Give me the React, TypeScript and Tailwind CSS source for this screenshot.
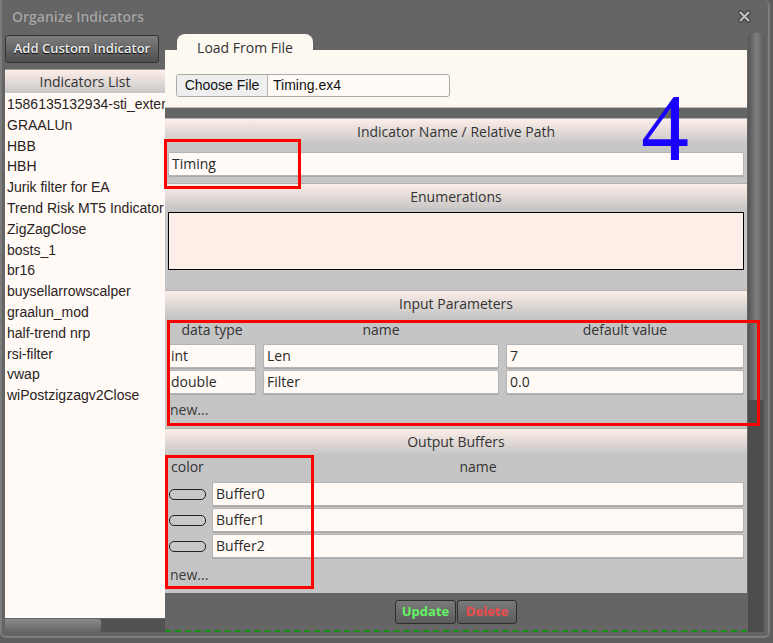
import type { ReactNode } from 'react'

const INDICATORS = [
  '1586135132934-sti_external',
  'GRAALUn',
  'HBB',
  'HBH',
  'Jurik filter for EA',
  'Trend Risk MT5 Indicator',
  'ZigZagClose',
  'bosts_1',
  'br16',
  'buysellarrowscalper',
  'graalun_mod',
  'half-trend nrp',
  'rsi-filter',
  'vwap',
  'wiPostzigzagv2Close',
]

const PARAMS = [
  { type: 'int', name: 'Len', value: '7' },
  { type: 'double', name: 'Filter', value: '0.0' },
]

const BUFFERS = ['Buffer0', 'Buffer1', 'Buffer2']

const sans = "font-['Open_Sans','Noto_Sans',sans-serif]"
const arial = "font-['Liberation_Sans',Arial,sans-serif]"

function Field({ value, className = '' }: { value: string; className?: string }) {
  return (
    <div
      className={`h-[24px] bg-[#fffaf6] border border-[#b4b4b4] rounded-[2px] shadow-[0_1px_0_#a8a8a8] pl-[3px] text-[14px] leading-[22px] text-[#2a2a2a] ${sans} ${className}`}
    >
      {value}
    </div>
  )
}

function SectionHeader({ children }: { children: ReactNode }) {
  return (
    <div
      className={`h-[27px] border-t border-[#b0b0b0] bg-gradient-to-b from-[#fdeee8] to-[#c5c5c5] text-center text-[14px] leading-[26px] text-[#333] ${sans}`}
    >
      {children}
    </div>
  )
}

function CloseIcon() {
  return (
    <svg width="15" height="15" viewBox="0 0 15 15">
      <path d="M3.5 3.5 L11.5 11.5 M11.5 3.5 L3.5 11.5" stroke="#3e3e3e" strokeWidth="4.6" strokeLinecap="round" />
      <path d="M3.5 3.5 L11.5 11.5 M11.5 3.5 L3.5 11.5" stroke="#bdbdbd" strokeWidth="2.4" strokeLinecap="round" />
    </svg>
  )
}

export default function App() {
  return (
    <div className="relative w-[773px] h-[643px] bg-[#5e5e5e] overflow-hidden">
      <div className="w-[770px] h-[638px] bg-[#656565] border-x-2 border-b-2 border-[#7c7c7c] rounded-b-[6px] rounded-tr-[6px] flex flex-col">
        {/* Title bar */}
        <div className="h-[33px] shrink-0 flex items-center justify-between pl-[10px] pr-[16px]">
          <span className={`text-[14px] font-semibold text-[#a6a6a6] [text-shadow:0_0_1px_#555] ${sans}`}>Organize Indicators</span>
          <CloseIcon />
        </div>

        <div className="flex flex-row flex-1 min-h-0">
          {/* Left column: indicator list */}
          <div className="w-[160px] ml-[3px] flex flex-col">
            <button
              className={`mt-[2px] h-[28px] w-[154px] rounded-[3px] border border-[#333] bg-gradient-to-b from-[#7e7e7e] to-[#4e4e4e] text-[13px] font-semibold text-[#ececec] [text-shadow:0_1px_1px_#000] ${sans}`}
            >
              Add Custom Indicator
            </button>

            <div className="mt-[6px] h-[549px] bg-[#fffaf5] border-t border-[#9a9a9a] overflow-hidden">
              <div className={`h-[23px] bg-gradient-to-b from-[#fdeee8] to-[#c8c8c8] text-center text-[14px] leading-[23px] text-[#333] ${sans}`}>
                Indicators List
              </div>
              <ul className={`pl-[2px] pt-[1px] text-[14px] leading-[20.8px] text-[#2b2222] ${arial}`}>
                {INDICATORS.map((name) => (
                  <li key={name} className="whitespace-nowrap overflow-hidden">
                    {name}
                  </li>
                ))}
              </ul>
            </div>

            {/* horizontal scrollbar */}
            <div className="mt-[1px] h-[13px] flex bg-[#525252]">
              <div className="w-[96px] h-full rounded-r-[3px] bg-gradient-to-b from-[#8a8a8a] to-[#666]" />
            </div>
          </div>

          {/* Right column: editor */}
          <div className="w-[582px] flex flex-col">
            <div className="mt-[1px] h-[16px] shrink-0">
              <div className={`relative z-10 ml-[12px] w-[136px] h-[24px] rounded-t-[8px] bg-[#fdf9f1] text-center text-[14px] leading-[18px] pt-[5px] text-[#333] ${sans}`}>
                Load From File
              </div>
            </div>
            <div className="h-[58px] shrink-0 bg-[#fdf9f1] border-b border-[#bbb] pt-[24px] pl-[11px]">
              <div className={`w-[274px] h-[23px] flex border border-[#a9a9a9] rounded-[3px] bg-[#fffaf5] ${arial}`}>
                <div className="w-[91px] bg-[#efefef] border-r border-[#b5b5b5] rounded-l-[2px] text-center text-[14px] leading-[21px] text-[#111]">
                  Choose File
                </div>
                <div className="pl-[5px] text-[14px] leading-[21px] text-[#111]">Timing.ex4</div>
              </div>
            </div>

            <div className="h-[10px] shrink-0" />

            <div className="bg-[#c5c5c5]">
              {/* Indicator name */}
              <SectionHeader>Indicator Name / Relative Path</SectionHeader>
              <div className="px-[3px] pt-[7px] pb-[7px]">
                <Field value="Timing" />
              </div>

              {/* Enumerations */}
              <SectionHeader>Enumerations</SectionHeader>
              <div className="px-[3px] pt-[2px] pb-[20px]">
                <div className="h-[58px] bg-[#fdeee8] border border-black" />
              </div>

              {/* Input parameters */}
              <SectionHeader>Input Parameters</SectionHeader>
              <div className={`px-[3px] pt-[4px] pb-[9px] text-[14px] text-[#333] ${sans}`}>
                <div className="grid grid-cols-[88px_236px_238px] gap-x-[7px] h-[18px] leading-[18px] text-center">
                  <span>data type</span>
                  <span>name</span>
                  <span>default value</span>
                </div>
                <div className="mt-[5px] flex flex-col gap-[2px]">
                  {PARAMS.map((p) => (
                    <div key={p.name} className="grid grid-cols-[88px_236px_238px] gap-x-[7px]">
                      <Field value={p.type} className="rounded-none border-l-0 pl-[1px]" />
                      <Field value={p.name} />
                      <Field value={p.value} />
                    </div>
                  ))}
                </div>
                <div className="mt-[7px] h-[18px] leading-[18px] pl-[2px] text-[#3a3a3a]">new...</div>
              </div>

              {/* Output buffers */}
              <SectionHeader>Output Buffers</SectionHeader>
              <div className={`px-[3px] pt-[3px] pb-[9px] text-[14px] text-[#333] ${sans}`}>
                <div className="grid grid-cols-[40px_1fr] gap-x-[4px] h-[18px] leading-[18px] text-center">
                  <span className="text-left pl-[3px]">color</span>
                  <span>name</span>
                </div>
                <div className="mt-[6px] flex flex-col gap-[2px]">
                  {BUFFERS.map((b) => (
                    <div key={b} className="flex items-center gap-[6px]">
                      <div className="ml-[1px] w-[37px] h-[11px] rounded-[5px] border border-[#222] bg-[#c8c8c8]" />
                      <Field value={b} className="flex-1" />
                    </div>
                  ))}
                </div>
                <div className="mt-[8px] h-[18px] leading-[18px] pl-[2px] text-[#3a3a3a]">new...</div>
              </div>
            </div>

            {/* Actions */}
            <div className="h-[37px] shrink-0 flex items-center justify-center">
              <div className={`flex text-[13px] font-bold [text-shadow:0_1px_1px_#000] ${sans}`}>
                <button className="w-[61px] h-[24px] rounded-[3px] border border-[#2e2e2e] bg-gradient-to-b from-[#7a7a7a] to-[#5c5c5c] text-[#62f262]">
                  Update
                </button>
                <button className="ml-[1px] w-[60px] h-[24px] rounded-[3px] border border-[#2e2e2e] bg-gradient-to-b from-[#7a7a7a] to-[#5c5c5c] text-[#f24a4a]">
                  Delete
                </button>
              </div>
            </div>
            <div className="h-0 border-t-2 border-dashed border-[#129112]" />
          </div>

          {/* Vertical scrollbar */}
          <div className="ml-[1px] w-[17px] flex flex-col pb-[4px]">
            <div className="h-[367px] rounded-t-[5px] bg-gradient-to-r from-[#555] via-[#7e7e7e] to-[#5a5a5a]" />
            <div className="flex-1 bg-[#4c4c4c] border-r-2 border-[#5a5a5a]" />
          </div>
        </div>
      </div>

      {/* Annotation marks */}
      <div className="absolute left-[164px] top-[139px] w-[137px] h-[50px] border-[3px] border-[#ff0000]" />
      <div className="absolute left-[167px] top-[320px] w-[593px] h-[106px] border-[3px] border-[#ff0000]" />
      <div className="absolute left-[165px] top-[455px] w-[149px] h-[134px] border-[3px] border-[#ff0000]" />
      <div className="absolute left-[641px] top-[80px] text-[96px] leading-[96px] text-[#1a00ff] [font-family:'Liberation_Serif','DejaVu_Serif',serif]">
        4
      </div>
    </div>
  )
}
